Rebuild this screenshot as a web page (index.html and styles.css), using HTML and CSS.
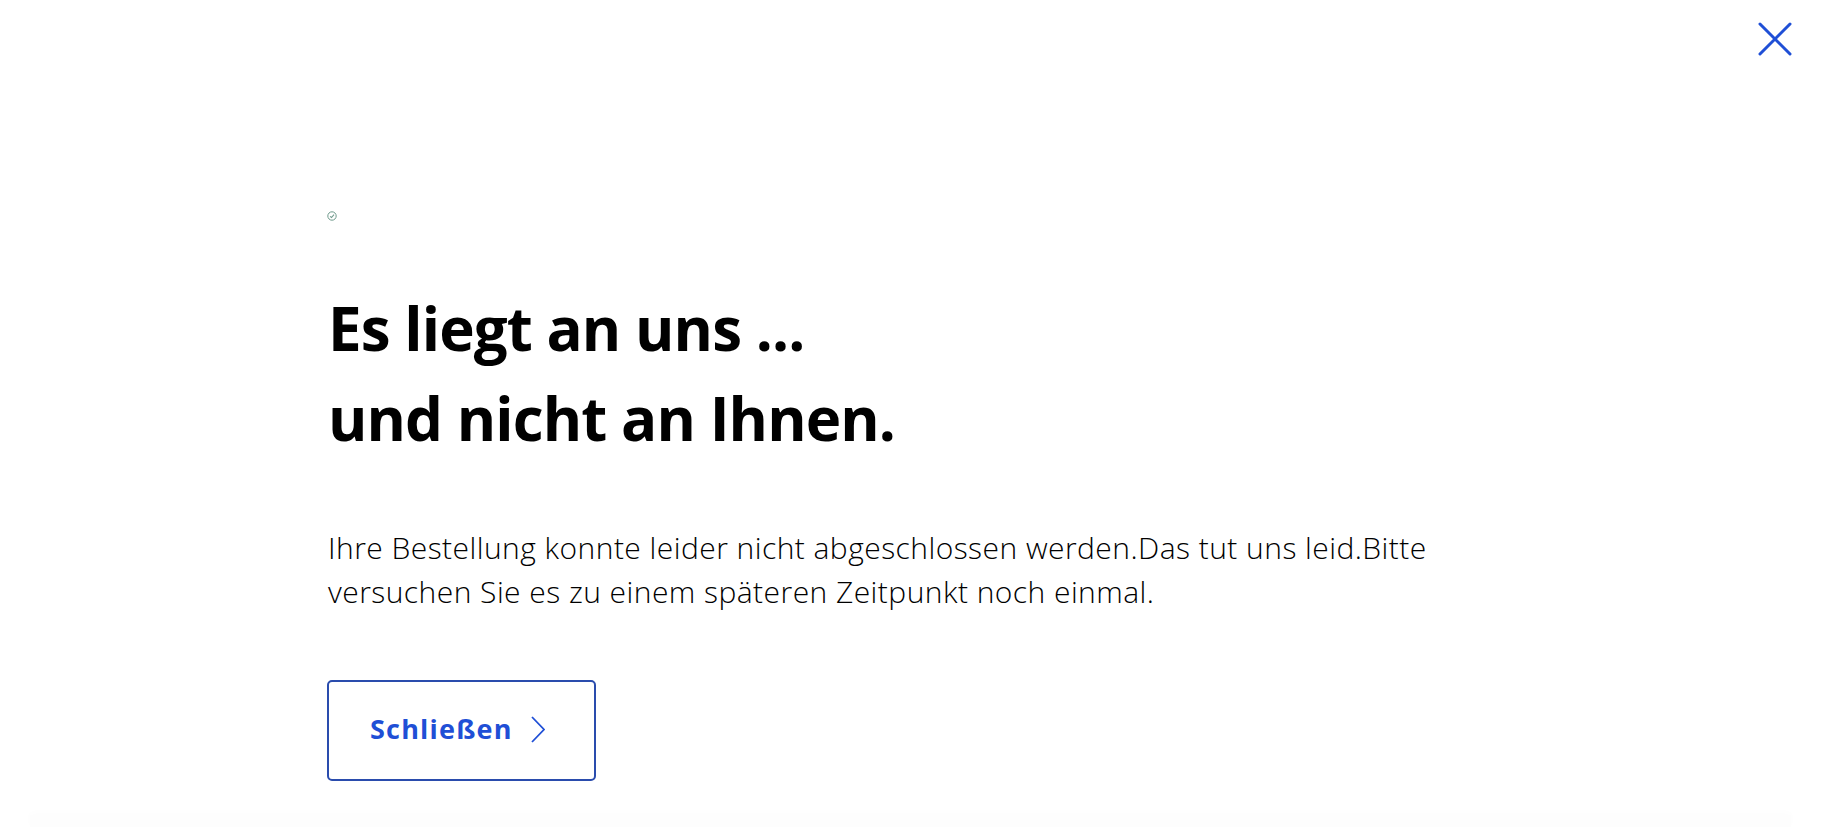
FILE: index.html
```html
<!DOCTYPE html>
<html lang="de">
<head>
<meta charset="utf-8">
<title>Fehler</title>
<link rel="stylesheet" href="styles.css">
</head>
<body>
<div class="page">
  <header class="topbar">
    <button class="close" aria-label="Schließen">
      <svg width="34" height="34" viewBox="0 0 34 34" aria-hidden="true">
        <path d="M2 2 L32 32 M32 2 L2 32" stroke="#1f4fd6" stroke-width="3" fill="none" stroke-linecap="round"/>
      </svg>
    </button>
  </header>
  <main class="content">
    <svg class="status" width="10" height="10" viewBox="0 0 10 10" aria-hidden="true">
      <circle cx="5" cy="5" r="4.2" stroke="#6f9a8c" stroke-width="1" fill="none"/>
      <path d="M3.1 5.3 L4.5 6.5 L7 3.7" stroke="#6f9a8c" stroke-width="1.1" fill="none"/>
    </svg>
    <h1 class="title">Es liegt an uns ...<br>und nicht an Ihnen.</h1>
    <p class="text">Ihre Bestellung konnte leider nicht abgeschlossen werden.Das tut uns leid.Bitte versuchen Sie es zu einem späteren Zeitpunkt noch einmal.</p>
    <button class="btn">
      <span class="btn-label">Schließen</span>
      <svg class="chev" width="14" height="27" viewBox="0 0 14 27" aria-hidden="true">
        <path d="M1 1 L13 13.5 L1 26" stroke="#1f4fd6" stroke-width="1.8" fill="none"/>
      </svg>
    </button>
  </main>
  <div class="footer-shadow"></div>
</div>
</body>
</html>
```
FILE: styles.css
```css
* { box-sizing: border-box; }
html, body { margin: 0; padding: 0; background: #fff; }
body { font-family: "Open Sans", Lato, sans-serif; color: #000; overflow: hidden; }
.page { height: 827px; display: flex; flex-direction: column; }
.topbar {
  height: 78px;
  display: flex;
  justify-content: flex-end;
  align-items: flex-start;
  padding: 22px 29px 0 0;
}
.close {
  width: 34px; height: 34px; padding: 0; border: 0; background: none;
  display: flex; cursor: pointer;
}
.content {
  flex: 1;
  display: flex;
  flex-direction: column;
  align-items: flex-start;
  padding-left: 327px;
}
.status { display: block; margin-top: 133px; }
.title {
  margin: 62px 0 0 1px;
  font-size: 60px;
  line-height: 90px;
  font-weight: 700;
  letter-spacing: -0.9px;
}
.text {
  margin: 63px 0 0 1px;
  max-width: 1150px;
  font-size: 30px;
  line-height: 44px;
  font-weight: 300;
  letter-spacing: 0.45px;
}
.btn {
  margin-top: 66px;
  width: 269px;
  height: 101px;
  border: 2px solid #2a4cad;
  border-radius: 5px;
  background: #fff;
  display: flex;
  align-items: center;
  padding: 0 0 4px 41px;
  gap: 18px;
  font-family: "Open Sans", Lato, sans-serif;
  cursor: pointer;
}
.btn-label { font-size: 27px; font-weight: 700; color: #1f4fd6; letter-spacing: 1.2px; }
.chev { display: block; margin-top: 2px; }
.footer-shadow {
  height: 12px;
  margin: 0 30px;
  box-shadow: 0 -2px 8px rgba(0,0,0,0.015);
  background: #fdfdfd;
}
```
